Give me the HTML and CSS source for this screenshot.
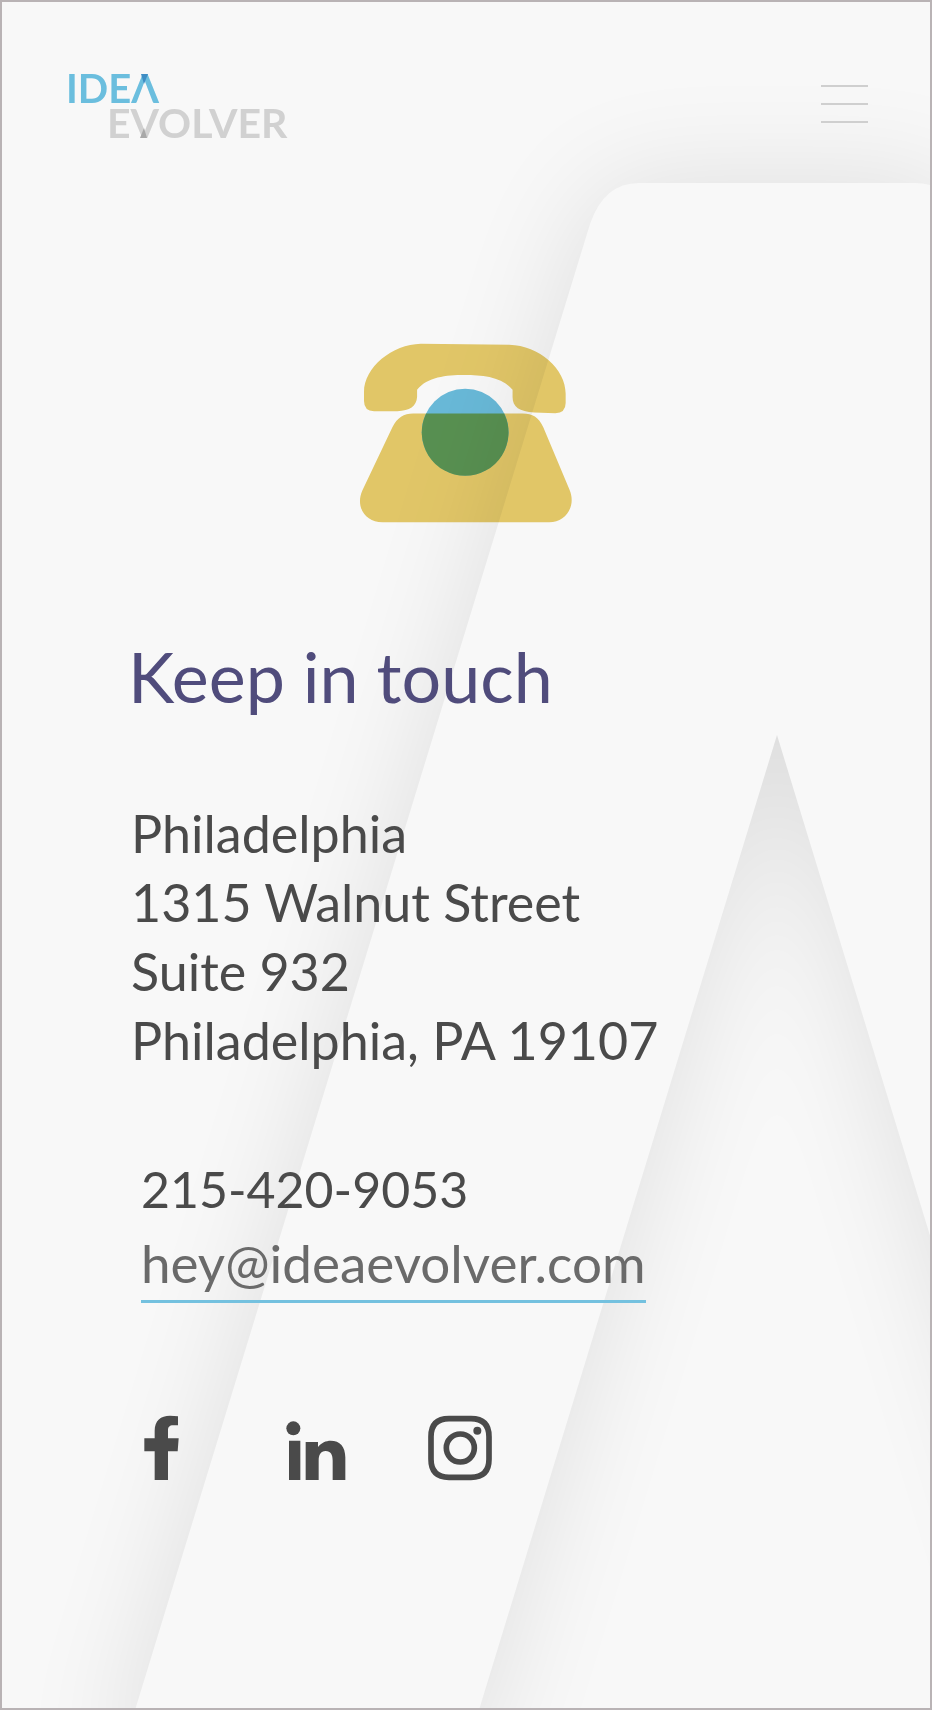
FILE: index.html
```html
<!DOCTYPE html>
<html lang="en">
<head>
<meta charset="utf-8">
<meta name="viewport" content="width=device-width, initial-scale=1">
<title>Idea Evolver – Keep in touch</title>
<link rel="stylesheet" href="styles.css">
</head>
<body>
<div class="page">
  <svg class="backdrop" viewBox="0 0 928 1706" preserveAspectRatio="xMinYMin slice" aria-hidden="true">
    <defs>
      <filter id="soft" filterUnits="userSpaceOnUse" x="-200" y="-100" width="1900" height="2100" color-interpolation-filters="sRGB">
        <feGaussianBlur stdDeviation="58"/>
      </filter>
      <path id="letter" fill-rule="evenodd" d="M637 181 H913 Q950 181 962 222 L1441 1780 H111 L588 222 Q602 181 637 181 Z M775 733 L455 1780 H1095 Z"/>
    </defs>
    <use href="#letter" class="backdrop-shadow" filter="url(#soft)"/>
    <use href="#letter" class="backdrop-face"/>
  </svg>

  <header class="header">
    <a class="logo" href="#" aria-label="Idea Evolver">
      <svg width="226" height="76" viewBox="0 0 226 76">
        <text class="logo-idea" x="0" y="37">IDEΛ</text>
        <text class="logo-evolver" x="41" y="72">EVOLVER</text>
        <path class="logo-tip-blue" d="M75 8h7l-4 10z"/>
        <path class="logo-tip-gray" d="M74 72h7l-3-10z"/>
      </svg>
    </a>
    <button class="menu" type="button" aria-label="Menu">
      <span class="menu-bar"></span>
      <span class="menu-bar"></span>
      <span class="menu-bar"></span>
    </button>
  </header>

  <main class="main">
    <svg class="phone" viewBox="63 69 635 537" aria-hidden="true">
      <path fill="#e8cc6a" d="M75 215C75 140 160 72 245 70L510 73C600 75 679 145 679 220V248Q679 278 648 278L585 276C540 274 520 260 520 230V208C490 170 430 164 376 164C320 164 265 170 234 208V230C232 258 212 271 175 272L105 272Q75 272 75 242Z"/>
      <path fill="#e8cc6a" d="M222 279H550C580 279 598 290 612 320L690 506C712 555 680 605 630 605H130C80 605 48 560 70 510L160 320C174 292 195 279 222 279Z"/>
      <circle fill="#6bbede" cx="378" cy="335" r="130"/>
      <path fill="#5a9453" d="M261 279H495A130 130 0 1 1 261 279Z"/>
    </svg>

    <section class="contact">
      <h1 class="title">Keep in touch</h1>
      <address class="address">
        Philadelphia<br>
        1315 Walnut Street<br>
        Suite 932<br>
        Philadelphia, PA 19107
      </address>
      <div class="reach">
        <a class="tel" href="tel:2154209053">215-420-9053</a>
        <a class="email" href="mailto:hey@ideaevolver.com">hey@ideaevolver.com</a>
        <nav class="social" aria-label="Social media">
          <a href="#" aria-label="Facebook">
            <svg width="36" height="66" viewBox="72 75 108 198"><path d="M104 270V184H73V145H104V122C104 92 122 77 150 77Q162 77 174 79V106H160C148 106 144 112 144 121V145H176L173 184H144V270Z"/></svg>
          </a>
          <a href="#" aria-label="LinkedIn">
            <svg width="60" height="66" viewBox="498 75 180 198"><circle cx="520" cy="115" r="21"/><path d="M507 152H541V270H507ZM557 156H594V171C604 158 618 152 632 152C660 152 676 170 676 202V270H638V212C638 194 632 183 617 183C602 183 596 195 596 212V270H557Z"/></svg>
          </a>
          <a href="#" aria-label="Instagram">
            <svg width="64" height="66" viewBox="925 75 192 198"><path class="stroke" d="M934 140Q934 86 988 86H1054Q1108 86 1108 140V208Q1108 262 1054 262H988Q934 262 934 208Z"/><circle class="stroke" cx="1022" cy="174" r="42"/><circle cx="1073" cy="122" r="12"/></svg>
          </a>
        </nav>
      </div>
    </section>
  </main>
</div>
</body>
</html>
```
FILE: styles.css
```css
* {
  box-sizing: border-box;
}

body {
  margin: 0;
  background: #f8f8f8;
  color: #4a4a4a;
  font-family: Lato, "Open Sans", sans-serif;
}

a {
  color: inherit;
  text-decoration: none;
}

svg {
  display: block;
  overflow: visible;
}

.page {
  position: relative;
  min-height: 100vh;
  overflow: hidden;
  border: 2px solid #b9b3b5;
}

.backdrop {
  position: absolute;
  top: 0;
  left: 0;
  width: 100%;
  height: 100%;
}

.backdrop-shadow {
  fill: #000;
  opacity: 0.1;
}

.backdrop-face {
  fill: #f8f8f8;
}

.header {
  position: relative;
  display: flex;
  justify-content: space-between;
  align-items: center;
  padding: 64px 62px 0 64px;
}

.logo-idea,
.logo-evolver {
  font-size: 40px;
  font-weight: 700;
}

.logo-evolver {
  font-size: 41px;
}

.logo-idea {
  fill: #6bbede;
}

.logo-evolver {
  fill: #d1d1d1;
}

.logo-tip-blue {
  fill: #3f8dc4;
}

.logo-tip-gray {
  fill: #a8a8a8;
}

.menu {
  display: flex;
  flex-direction: column;
  gap: 16px;
  width: 47px;
  padding: 0;
  border: 0;
  background: none;
  cursor: pointer;
}

.menu-bar {
  height: 2px;
  background: #cfcfcf;
}

.main {
  position: relative;
  padding: 201px 0 64px;
}

.phone {
  width: 212px;
  height: 180px;
  margin: 0 auto;
  mix-blend-mode: multiply;
}

.contact {
  padding: 101px 64px 0 126px;
}

.title {
  margin: 0;
  color: #504c7c;
  font-size: 70px;
  font-weight: 400;
  line-height: 104px;
}

.address {
  margin-top: 71px;
  padding-left: 3px;
  font-size: 52px;
  font-style: normal;
  line-height: 69px;
}

.reach {
  display: flex;
  flex-direction: column;
  align-items: flex-start;
  margin-top: 78px;
  padding-left: 13px;
}

.tel {
  font-size: 50px;
  line-height: 72px;
}

.email {
  border-bottom: 3px solid #74c1df;
  color: #6a6a6a;
  font-size: 53px;
  line-height: 75px;
}

.social {
  display: grid;
  grid-template-columns: repeat(3, 142px);
  margin-top: 112px;
  padding-left: 3px;
}

.social svg {
  fill: #4a4a4a;
}

.social .stroke {
  fill: none;
  stroke: #4a4a4a;
  stroke-width: 17;
}
```
